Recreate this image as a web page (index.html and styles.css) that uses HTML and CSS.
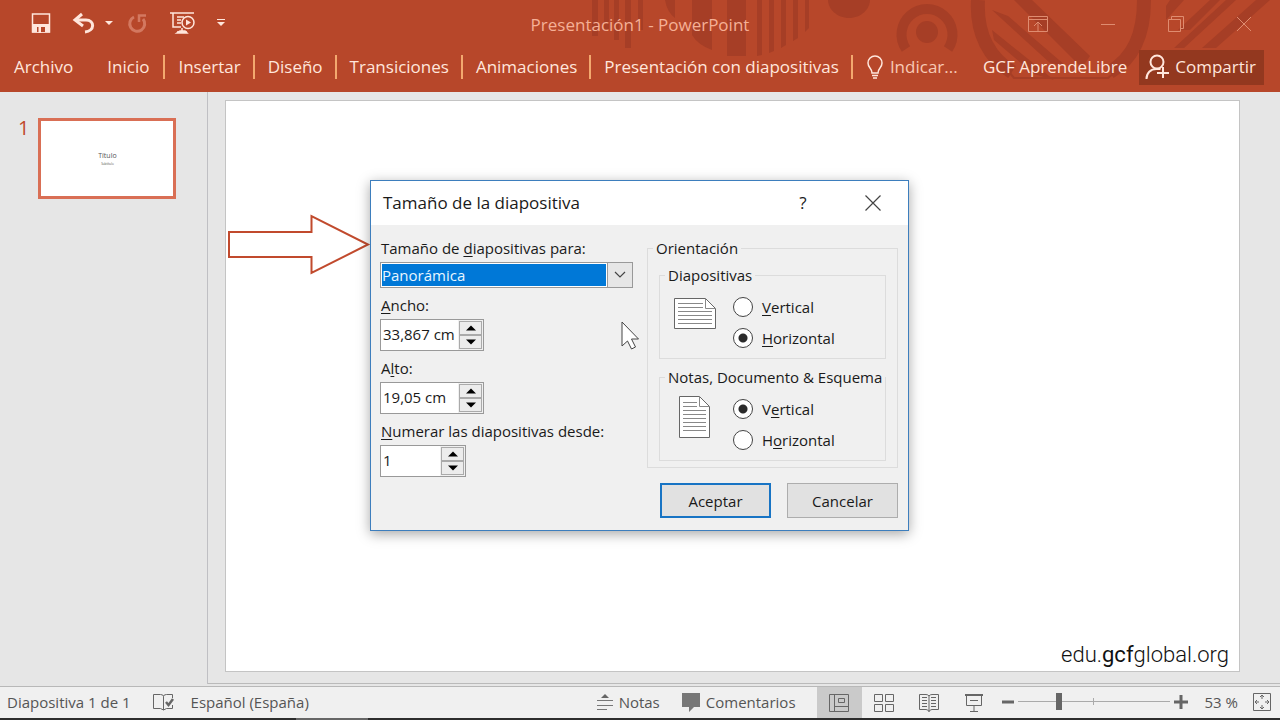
FILE: index.html
```html
<!DOCTYPE html>
<html lang="es">
<head>
<meta charset="utf-8">
<meta name="viewport" content="width=device-width, initial-scale=1">
<title>Presentación1 - PowerPoint</title>
<link rel="stylesheet" href="styles.css">
</head>
<body>
<header class="ribbon">
  <svg class="ribbon-art" width="760" height="92" viewBox="520 0 760 92" aria-hidden="true">
    <g fill="#a63e26">
      <path d="M592 0h6v36h-6zM604 0h5v30h-5zM614 0h5v40h-5zM625 0h6v48h-6zM638 0h5v30h-5zM665 0h10v18q-8-6-10-18zM692 0h20v50q-14-5-20-15zM727 0h19v56h-19zM757 0h5v55l-5 1zM769 0h5v51l-5 2zM781 0h5v45l-5 3zM793 0h5v38l-5 3zM805 0h4v28l-4 4z"/>
      <path d="M828 0h42c0 9-9 18-21 18s-21-9-21-18z"/>
      <circle cx="927" cy="32" r="11"/>
      <path d="M992 10l16 6 58 50-16-3zM992 30l62 50-20-6-40-34zM1014 0h18l58 56-8 12zM1166 20l18-20h-14l-4 6zM1190 30l30-30h-10l-32 30zM1202 48l54-48h14l-54 48zM1184 48l52-48h-10l-52 48z"/>
    </g>
    <g fill="none" stroke="#a63e26">
      <path d="M906 49a25.500 25.500 0 1 1 42 0" stroke-width="10"/>
      <path d="M978 0c-2 34 12 58 34 72M1110 72c24-14 34-38 34-72" stroke-width="14"/>
      <path d="M1004 66l10 12h94l14-12" stroke-width="2"/>
    </g>
  </svg>
  <div class="titlebar">
    <div class="quick">
      <button class="icon-btn" aria-label="Guardar"><svg width="22" height="22" viewBox="0 0 22 22"><path d="M2.500 2h17v18h-17z" fill="none" stroke="#ffe6dc" stroke-width="1.500"/><path d="M2 12h18v8.500H2z" fill="#ffe6dc"/><path d="M7 15h8v5H7z" fill="#b7472a"/><path d="M8.500 15H11v6H8.500z" fill="#ffe6dc"/></svg></button>
      <button class="icon-btn undo" aria-label="Deshacer"><svg width="24" height="22" viewBox="0 0 24 22" fill="none" stroke="#ffe6dc"><path d="M4 8h10c9 0 9 11-1 12" stroke-width="3"/><path d="M10 2L3 8l8 6" stroke-width="3"/></svg></button>
      <button class="icon-btn arrow" aria-label="Opciones de deshacer"><svg width="10" height="6" viewBox="0 0 10 6"><path d="M1 1h8L5 5z" fill="#ffe6dc"/></svg></button>
      <button class="icon-btn redo" aria-label="Repetir"><svg width="22" height="22" viewBox="0 0 22 22" fill="none" stroke="#d37860" stroke-width="3"><path d="M8 5a7.500 7.500 0 1 0 9 2"/><path d="M13 10V3.500h7" stroke-width="2.500"/></svg></button>
      <button class="icon-btn show" aria-label="Presentación desde el principio"><svg width="28" height="24" viewBox="0 0 28 24" fill="none" stroke="#ffe6dc" stroke-width="1.500"><path d="M2 2h24M5 2v14h8M9 6h7M9 9h4M9 12h4M14 17v4M9 21h10"/><path d="M12 20h5l2 2H9z" fill="#ffe6dc"/><circle cx="20" cy="11.500" r="6" fill="#b7472a"/><path d="M18 8.500v6l5-3z" fill="#ffe6dc" stroke="none"/></svg></button>
      <button class="icon-btn" aria-label="Personalizar barra"><svg width="10" height="9" viewBox="0 0 10 9"><path d="M1 1h8v1H1zM1 4h8L5 8z" fill="#ffe6dc"/></svg></button>
    </div>
    <h1 class="doc-title">Presentación1 - PowerPoint</h1>
    <div class="window-buttons">
      <button class="icon-btn" aria-label="Opciones de la cinta"><svg width="20" height="18" viewBox="0 0 20 18" fill="none" stroke="#df8c70"><path d="M.5 1.500h19v15H.5zM.5 4.500h19M10 16V7M6 11l4-4 4 4"/></svg></button>
      <button class="icon-btn" aria-label="Minimizar"><svg width="16" height="16" viewBox="0 0 16 16" fill="none" stroke="#df8c70"><path d="M1 8.500h14"/></svg></button>
      <button class="icon-btn" aria-label="Restaurar"><svg width="16" height="16" viewBox="0 0 16 16" fill="none" stroke="#df8c70"><path d="M.5 3.500h12v12H.5zM3.500 3.500v-3h12v12h-3"/></svg></button>
      <button class="icon-btn" aria-label="Cerrar"><svg width="16" height="16" viewBox="0 0 16 16" fill="none" stroke="#df8c70"><path d="M1 1l14 14M15 1L1 15"/></svg></button>
    </div>
  </div>
  <nav class="tabs">
    <button class="tab file">Archivo</button>
    <button class="tab">Inicio</button>
    <button class="tab">Insertar</button>
    <button class="tab">Diseño</button>
    <button class="tab">Transiciones</button>
    <button class="tab">Animaciones</button>
    <button class="tab">Presentación con diapositivas</button>
    <button class="tab tell"><svg width="18" height="24" viewBox="0 0 18 24" fill="none" stroke="#ffe6dc" stroke-width="1.500"><path d="M6 18c0-5-4-5-4-10a7 7 0 0 1 14 0c0 5-4 5-4 10zM6 20.500h6M7 23h4"/></svg>Indicar...</button>
    <div class="account">
      <button class="tab plain">GCF AprendeLibre</button>
      <button class="share"><svg width="24" height="26" viewBox="0 0 24 26" fill="none" stroke="#ffe6dc" stroke-width="2"><circle cx="12" cy="8" r="6.500"/><path d="M1.500 25c0-6 4-10 10-10h4M18 13v11M12 19h12"/></svg>Compartir</button>
    </div>
  </nav>
</header>

<main class="workspace">
  <aside class="thumbs">
    <span class="thumb-number">1</span>
    <button class="thumb"><span class="thumb-title">Título</span><span class="thumb-sub">Subtítulo</span></button>
  </aside>
  <section class="stage">
    <div class="slide"><p class="brand">edu.<b>gcf</b>global.org</p></div>
  </section>

  <svg class="callout" width="144" height="62" viewBox="0 0 144 62" aria-hidden="true"><path d="M2 18H84.500V2L141 30.500 84.500 59V43H2z" fill="#fff" stroke="#c14a2d" stroke-width="2"/></svg>

  <form class="dialog" role="dialog" aria-labelledby="dialog-title">
    <div class="dialog-head">
      <h2 class="dialog-title" id="dialog-title">Tamaño de la diapositiva</h2>
      <button type="button" class="head-btn" aria-label="Ayuda">?</button>
      <button type="button" class="head-btn" aria-label="Cerrar"><svg width="18" height="18" viewBox="0 0 18 18" fill="none" stroke="#444" stroke-width="1.200"><path d="M1.500 1.500l15 15M16.500 1.500l-15 15"/></svg></button>
    </div>
    <div class="dialog-body">
      <div class="sizes">
        <label class="field-label" for="size">Tamaño de <u>d</u>iapositivas para:</label>
        <div class="combo">
          <select id="size"><option>Panorámica</option></select>
          <span class="combo-arrow"><svg width="12" height="8" viewBox="0 0 12 8" fill="none" stroke="#444" stroke-width="1.200"><path d="M1 1l5 5 5-5"/></svg></span>
        </div>
        <label class="field-label" for="width"><u>A</u>ncho:</label>
        <div class="spin">
          <input id="width" type="text" value="33,867 cm">
          <div class="steps"><button type="button" aria-label="Más ancho"><svg width="10" height="6"><path d="M0 5.500L5 .5l5 5z"/></svg></button><button type="button" aria-label="Menos ancho"><svg width="10" height="6"><path d="M0 .5l5 5 5-5z"/></svg></button></div>
        </div>
        <label class="field-label" for="height">A<u>l</u>to:</label>
        <div class="spin">
          <input id="height" type="text" value="19,05 cm">
          <div class="steps"><button type="button" aria-label="Más alto"><svg width="10" height="6"><path d="M0 5.500L5 .5l5 5z"/></svg></button><button type="button" aria-label="Menos alto"><svg width="10" height="6"><path d="M0 .5l5 5 5-5z"/></svg></button></div>
        </div>
        <label class="field-label" for="start"><u>N</u>umerar las diapositivas desde:</label>
        <div class="spin narrow">
          <input id="start" type="text" value="1">
          <div class="steps"><button type="button" aria-label="Aumentar"><svg width="10" height="6"><path d="M0 5.500L5 .5l5 5z"/></svg></button><button type="button" aria-label="Disminuir"><svg width="10" height="6"><path d="M0 .5l5 5 5-5z"/></svg></button></div>
        </div>
      </div>
      <div class="side">
        <fieldset class="group outer">
          <legend>Orientación</legend>
          <fieldset class="group">
            <legend>Diapositivas</legend>
            <div class="choice">
              <svg class="page" width="44" height="42" viewBox="0 0 44 42"><path d="M1.500 5.500H32.500L42.500 15.500V35.500H1.500z" fill="#fff" stroke="#666"/><path d="M32.500 5.500v10h10M5 10.500h25M5 14.500h25M5 18.500h34M5 22.500h34M5 26.500h34M5 30.500h34" fill="none" stroke="#888"/></svg>
              <div class="radios">
                <label><input type="radio" name="slides"><span><u>V</u>ertical</span></label>
                <label><input type="radio" name="slides" checked><span><u>H</u>orizontal</span></label>
              </div>
            </div>
          </fieldset>
          <fieldset class="group">
            <legend>Notas, Documento &amp; Esquema</legend>
            <div class="choice">
              <svg class="page" width="44" height="44" viewBox="0 0 44 44"><path d="M6.500 1.500H26.500L36.500 11.500V42.500H6.500z" fill="#fff" stroke="#666"/><path d="M26.500 1.500v10h10M10 7.500h14M10 11.500h14M10 15.500h23M10 19.500h23M10 23.500h23M10 27.500h23M10 31.500h23M10 35.500h23" fill="none" stroke="#888"/></svg>
              <div class="radios">
                <label><input type="radio" name="notes" checked><span>V<u>e</u>rtical</span></label>
                <label><input type="radio" name="notes"><span>H<u>o</u>rizontal</span></label>
              </div>
            </div>
          </fieldset>
        </fieldset>
        <div class="actions">
          <button type="button" class="push primary">Aceptar</button>
          <button type="button" class="push">Cancelar</button>
        </div>
      </div>
    </div>
  </form>
  <svg class="cursor" width="20" height="30" viewBox="0 0 20 30" aria-hidden="true"><path d="M2 2v24l5.500-5 4 8 4-2-4-8h7z" fill="#fff" stroke="#444"/></svg>
</main>

<footer class="status">
  <span class="count">Diapositiva 1 de 1</span>
  <button class="icon-btn spell" aria-label="Ortografía"><svg width="22" height="18" viewBox="0 0 22 18" fill="none" stroke="#666"><path d="M20.500 5V1.500h-6q-3 0-3 2 0-2-3-2h-7v14h7l3 1.500 3-1.500h6V12M11.500 3.500V17"/><path d="M14 9l2.500 3L21 6" stroke-width="2.500"/></svg></button>
  <button class="text-btn">Español (España)</button>
  <div class="status-right">
    <button class="text-btn"><svg width="18" height="18" viewBox="0 0 18 18"><path d="M5 5l4-4 4 4z" fill="#666"/><path d="M1 7.500h16M1 12.500h16M1 16.500h10" stroke="#777"/></svg>Notas</button>
    <button class="text-btn comments"><svg width="20" height="20" viewBox="0 0 20 20"><path d="M1 1h18v14h-6l-5 5v-5H1z" fill="#777"/></svg>Comentarios</button>
    <div class="views">
      <button class="view active" aria-label="Normal"><svg width="20" height="18" viewBox="0 0 20 18" fill="none" stroke="#666"><path d="M.5.5h19v17H.5zM5.500.500v17M5.500 12.500h14M9.500 4.500h6v4h-6z"/></svg></button>
      <button class="view" aria-label="Clasificador"><svg width="20" height="18" viewBox="0 0 20 18" fill="none" stroke="#666"><path d="M.5.5h8v7h-8zM11.500.500h8v7h-8zM.5 10.500h8v7h-8zM11.500 10.500h8v7h-8z"/></svg></button>
      <button class="view" aria-label="Lectura"><svg width="20" height="18" viewBox="0 0 20 18" fill="none" stroke="#666"><path d="M10 2Q9 .5 7 .5H.5v15H7q2 0 3 2 1-2 3-2h6.500V.5H13q-2 0-3 1.500v16M3 3.500h5M3 6.500h5M3 9.500h5M3 12.500h5M12 3.500h5M12 6.500h5M12 9.500h5M12 12.500h5"/></svg></button>
      <button class="view" aria-label="Presentación"><svg width="20" height="18" viewBox="0 0 20 18" fill="none" stroke="#666"><path d="M1 1h18" stroke-width="2"/><path d="M2.500 1v10.500h15V1M6 6.500h8M10 12v5M6 17.500h8"/></svg></button>
    </div>
    <button class="icon-btn" aria-label="Alejar"><svg width="14" height="14"><path d="M1 7h12" stroke="#666" stroke-width="3"/></svg></button>
    <input class="zoom" type="range" min="10" max="100" value="34" aria-label="Zoom">
    <button class="icon-btn" aria-label="Acercar"><svg width="14" height="14"><path d="M0 7h14M7 0v14" stroke="#666" stroke-width="3"/></svg></button>
    <button class="text-btn percent">53 %</button>
    <button class="icon-btn" aria-label="Ajustar"><svg width="18" height="18" viewBox="0 0 18 18" fill="none" stroke="#666"><path d="M.5.5h17v17H.5zM9 2v4M7 4l2-2 2 2M9 16v-4M7 14l2 2 2-2M2 9h4M4 7L2 9l2 2M16 9h-4M14 7l2 2-2 2"/></svg></button>
  </div>
</footer>
<div class="desk-edge"></div>
</body>
</html>
```

FILE: styles.css
```css
* { box-sizing: border-box; }
body {
  margin: 0;
  min-height: 100vh;
  display: flex;
  flex-direction: column;
  background: #e6e6e6;
  color: #1a1a1a;
  font: 15px/24px "Open Sans", "Noto Sans", sans-serif;
}
button, input, select { font: inherit; color: inherit; }
button { margin: 0; padding: 0; border: 0; background: none; }
svg { display: block; flex: none; }
h1, h2, p { margin: 0; font-weight: 400; }
u { text-underline-offset: 2px; }

/* Ribbon */
.ribbon { position: relative; background: #b7472a; color: #ffe6dc; padding-bottom: 7px; }
.ribbon-art { position: absolute; top: 0; right: 0; }
.titlebar {
  position: relative;
  display: grid;
  grid-template-columns: 1fr auto 1fr;
  align-items: center;
  height: 49px;
  padding: 0 28px;
}
.quick { display: flex; align-items: center; gap: 20px; padding: 0 0 4px 2px; }
.icon-btn { display: flex; align-items: center; justify-content: center; }
.arrow { margin-left: -12px; }
.redo { margin-left: -8px; }
.doc-title { font-size: 17px; color: #f5b096; }
.window-buttons { display: flex; justify-content: flex-end; align-items: center; gap: 52px; padding-bottom: 2px; }
.tabs { position: relative; display: flex; align-items: center; height: 36px; font-size: 17px; }
.tab { display: flex; align-items: center; gap: 6px; height: 24px; padding: 0 12px 0 13px; border-left: 2px solid #f3a96f; white-space: nowrap; }
.tab.file, .tab.plain, .tab.file + .tab { border-left-color: transparent; }
.tab.file { padding-left: 12px; padding-right: 19px; }
.tab.file + .tab { padding-right: 14px; }
.tab.tell { padding-right: 8px; color: #f8c9b5; }
.account { display: flex; align-items: center; margin-left: auto; padding-right: 16px; }
.share { display: flex; align-items: center; gap: 6px; height: 35px; padding: 0 8px 0 6px; background: #93381f; }

/* Editing area */
.workspace { position: relative; flex: 1; display: flex; padding-bottom: 2px; }
.thumbs { display: flex; align-items: flex-start; gap: 9px; width: 208px; padding: 26px 0 0 18px; border-right: 1px solid #bfbfc3; }
.thumb-number { color: #c0492b; font-size: 20px; line-height: 20px; }
.thumb { display: flex; flex-direction: column; align-items: center; justify-content: center; width: 138px; height: 81px; border: 3px solid #d96f55; background: #fff; color: #555; }
.thumb-title { font-size: 7px; line-height: 10px; }
.thumb-sub { font-size: 3px; line-height: 6px; }
.stage { flex: 1; display: flex; padding: 8px 40px 11px 17px; border-bottom: 1px solid #bababa; }
.slide { flex: 1; display: flex; align-items: flex-end; justify-content: flex-end; padding: 4px 10px; border: 1px solid #c4c4c4; background: #fff; }
.brand { font: 300 22px/24px Roboto, "Liberation Sans", sans-serif; color: #111; }
.callout { position: absolute; left: 227px; top: 122px; }
.cursor { position: absolute; left: 620px; top: 228px; }

/* Dialog */
.dialog { position: absolute; left: 370px; top: 88px; width: 539px; border: 1px solid #3d7ebd; background: #f0f0f0; box-shadow: 0 3px 12px rgba(0, 0, 0, .35); color: #1a1a1a; }
.dialog-head { display: flex; align-items: center; height: 44px; padding-left: 12px; background: #fff; }
.dialog-title { flex: 1; font-size: 17px; }
.head-btn { display: flex; align-items: center; justify-content: center; width: 70px; height: 44px; font-size: 17px; }
.dialog-body { display: grid; grid-template-columns: 253px 251px; justify-content: space-between; padding: 11px 10px 12px 9px; }
.field-label { display: block; padding-left: 1px; white-space: nowrap; }
.combo { display: flex; height: 26px; margin: 2px 0 5px; border: 1px solid #999; background: #fff; }
.combo select { flex: 1; min-width: 0; margin: 1px 2px 1px 1px; padding: 0; border: 0; border-radius: 0; appearance: none; background: #0078d7; color: #e8f6ff; line-height: 22px; }
.combo-arrow { display: flex; align-items: center; justify-content: center; width: 26px; border: 1px solid #999; margin: -1px; background: #e6e6e6; }
.spin { display: flex; width: 104px; height: 32px; margin: 2px 0 5px; border: 1px solid #999; background: #fff; }
.spin input { flex: 1; min-width: 0; padding: 0 0 2px 2px; border: 0; background: none; }
.narrow { width: 86px; }
.steps { display: flex; flex-direction: column; width: 25px; padding: 1px; background: #f0f0f0; }
.steps button { flex: 1; display: flex; align-items: center; justify-content: center; border: 1px solid #aaa; background: #ececec; }
.group { min-width: 0; margin: 0; padding: 0 0 2px; border: 1px solid #dcdcdc; }
.group legend { margin-left: 5px; padding: 0 3px; white-space: nowrap; }
.outer { padding: 3px 11px 6px; }
.outer > legend { margin-left: -6px; }
.group .group + .group { margin-top: 6px; }
.choice { display: flex; align-items: flex-start; padding: 6px 13px; gap: 16px; }
.radios { display: flex; flex-direction: column; gap: 7px; padding-top: 2px; }
.radios label { display: flex; align-items: center; gap: 9px; height: 24px; }
.radios input { appearance: none; width: 20px; height: 20px; margin: 0; border: 1px solid #444; border-radius: 50%; background: #fff; }
.radios input:checked { background: radial-gradient(circle, #2b2b2b 4px, #fff 5px); }
.actions { display: flex; justify-content: flex-end; gap: 16px; margin-top: 15px; }
.push { width: 111px; height: 35px; border: 1px solid #adadad; background: #e1e1e1; }
.primary { border: 2px solid #1874c4; }

/* Status bar */
.status { display: flex; align-items: center; height: 32px; padding: 0 9px 2px 7px; border-top: 1px solid #b8b8b8; background: #f0f0f0; color: #555; white-space: nowrap; }
.spell { margin: 0 17px 0 21px; }
.status-right { display: flex; align-items: center; align-self: stretch; margin-left: auto; }
.text-btn { display: flex; align-items: center; gap: 5px; }
.comments { margin: 0 21px; }
.views { display: flex; align-self: stretch; margin: 0 4px -2px 0; }
.view { display: flex; align-items: center; justify-content: center; width: 45px; }
.active { background: #cacaca; }
.zoom { appearance: none; width: 152px; height: 18px; margin: 0 4px 0 3px; background: linear-gradient(#aaa, #aaa) 50% 50% / 1px 7px no-repeat, linear-gradient(#aaa, #aaa) 50% 50% / 100% 1px no-repeat; }
.zoom::-webkit-slider-thumb { appearance: none; width: 6px; height: 17px; background: #666; }
.percent { margin: 0 15px 0 17px; }
.desk-edge { height: 2px; background: linear-gradient(90deg, #2d2d2d 296px, #666 296px, #666 368px, #2d2d2d 368px); }
```
